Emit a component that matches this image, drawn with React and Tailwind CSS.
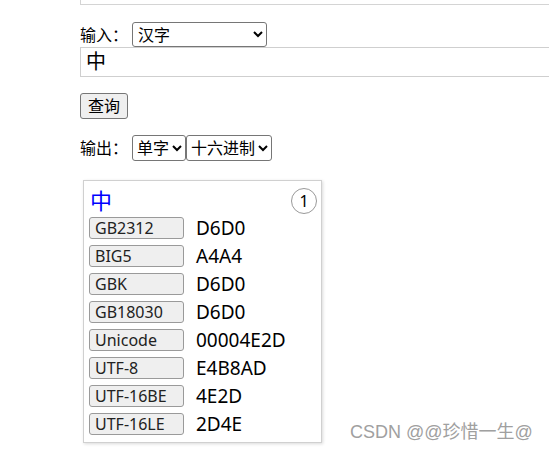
import React from 'react';

const rows = [
  ['GB2312', 'D6D0'],
  ['BIG5', 'A4A4'],
  ['GBK', 'D6D0'],
  ['GB18030', 'D6D0'],
  ['Unicode', '00004E2D'],
  ['UTF-8', 'E4B8AD'],
  ['UTF-16BE', '4E2D'],
  ['UTF-16LE', '2D4E'],
];

export default function App() {
  return (
    <div className="relative w-[549px] h-[453px] overflow-hidden bg-white text-black pl-[80px] font-['Noto_Sans','Noto_Sans_CJK_SC',sans-serif]">
      <div className="w-[600px] h-[5px] border-l border-b border-[#d4d4d4]" />

      <div className="flex items-center mt-[17px] h-[25px]">
        <span className="text-[16px] w-[52px] leading-none">输入：</span>
        <select className="w-[135px] h-[25px] border border-[#767676] rounded-[3px] text-[16px] px-[1px] bg-white">
          <option>汉字</option>
        </select>
      </div>
      <div className="w-[600px] h-[30px] border border-[#cfcfcf] flex items-center pl-[5px] text-[20px]">中</div>

      <button className="mt-[16px] w-[48px] h-[26px] border border-[#767676] rounded-[3px] bg-[#efefef] text-[16px] leading-none">查询</button>

      <div className="flex items-center mt-[16px] h-[26px]">
        <span className="text-[16px] w-[52px] leading-none">输出：</span>
        <select className="w-[54px] h-[26px] border border-[#767676] rounded-[3px] text-[16px] bg-white">
          <option>单字</option>
        </select>
        <select className="w-[86px] h-[26px] border border-[#767676] rounded-[3px] text-[16px] bg-white">
          <option>十六进制</option>
        </select>
      </div>

      <div className="ml-[3px] mt-[19px] w-[239px] border border-[#d0d0d0] shadow-[1px_1px_3px_rgba(0,0,0,0.15)] pl-[5px] pr-[4px] pt-[7px] pb-[7px]">
        <div className="flex items-start justify-between h-[29px]">
          <span className="text-[22px] leading-[24px] text-[#0000ff] ml-[1px]">中</span>
          <span className="w-[26px] h-[26px] rounded-full border border-[#999] flex items-center justify-center text-[16px] leading-none">1</span>
        </div>
        <div className="flex flex-col gap-[6px]">
          {rows.map(([k, v]) => (
            <div key={k} className="flex items-center h-[22px]">
              <span className="w-[95px] h-[22px] border border-[#9a9a9a] rounded-[3px] bg-[#efefef] text-[16px] leading-[20px] pl-[5px] text-[#222]">{k}</span>
              <span className="ml-[12px] text-[19px] leading-none">{v}</span>
            </div>
          ))}
        </div>
      </div>

      <div className="absolute left-[350px] top-[423px] text-[18px] text-[#a0a0a0] leading-none font-['Liberation_Sans','Noto_Sans_CJK_SC',sans-serif]">CSDN @@珍惜一生@</div>
    </div>
  );
}
